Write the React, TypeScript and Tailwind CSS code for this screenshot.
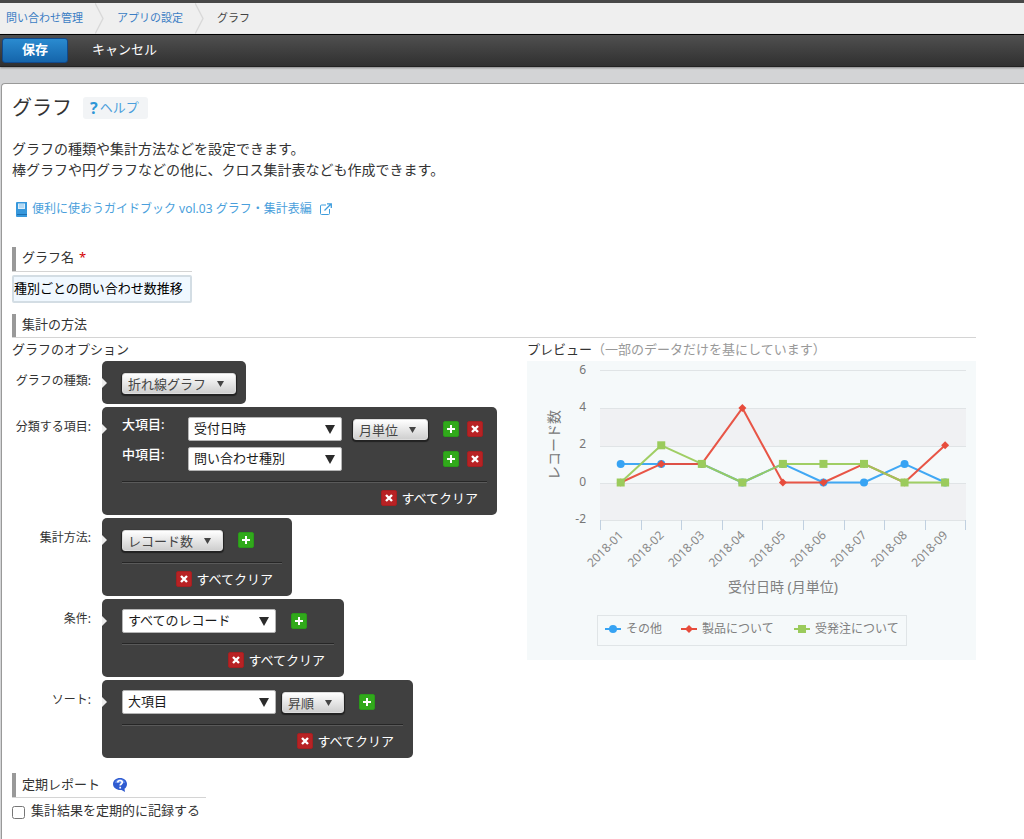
import type { ReactNode } from "react";

const MONTHS = ["2018-01", "2018-02", "2018-03", "2018-04", "2018-05", "2018-06", "2018-07", "2018-08", "2018-09"];

type Shape = "circle" | "diamond" | "square";

const SERIES: { name: string; color: string; shape: Shape; values: number[]; legendX: number }[] = [
  { name: "その他", color: "#37a3f3", shape: "circle", values: [1, 1, 1, 0, 1, 0, 0, 1, 0], legendX: 78 },
  { name: "製品について", color: "#e74c3c", shape: "diamond", values: [0, 1, 1, 4, 0, 0, 1, 0, 2], legendX: 154 },
  { name: "受発注について", color: "#9bcb5c", shape: "square", values: [0, 2, 1, 0, 1, 1, 1, 0, 0], legendX: 267 },
];

function Marker({ x, y, shape, color }: { x: number; y: number; shape: Shape; color: string }) {
  if (shape === "circle") return <circle cx={x} cy={y} r={4} fill={color} />;
  if (shape === "diamond")
    return <path d={`M${x} ${y - 4}L${x + 4} ${y}L${x} ${y + 4}L${x - 4} ${y}Z`} fill={color} />;
  return <rect x={x - 4} y={y - 4} width={8} height={8} fill={color} />;
}

const px = (i: number) => 93.7 + i * 40.55;
const py = (v: number) => 121.5 - v * 18.6;

function Chart() {
  return (
    <svg viewBox="0 0 449 299" className="block h-auto w-full bg-[#f5f9fa]" role="img" aria-label="レコード数">
      <rect x={73} y={47} width={366} height={38} fill="#f0f1f3" />
      <rect x={73} y={122} width={366} height={37} fill="#f0f1f3" />
      {[9, 47, 85, 122, 159].map((y) => (
        <rect key={y} x={73} y={y} width={366} height={1} fill="#e0e4e6" />
      ))}
      {Array.from({ length: 10 }, (_, i) => (
        <rect key={i} x={Math.round(73 + i * 40.6)} y={159} width={1} height={10} fill="#c0d0e0" />
      ))}
      {[6, 4, 2, 0, -2].map((v, i) => (
        <text key={v} x={59} y={13 + i * 37.2} textAnchor="end" className="fill-[#777777] text-[12px]">
          {v}
        </text>
      ))}
      <text transform="translate(32 84) rotate(-90)" textAnchor="middle" className="fill-[#777777] text-[14px]">
        レコード数
      </text>
      {MONTHS.map((m, i) => (
        <text
          key={m}
          transform={`translate(${97 + i * 40.55} 175) rotate(-45)`}
          textAnchor="end"
          className="fill-[#888888] text-[12px]"
        >
          {m}
        </text>
      ))}
      <text x={256} y={231} textAnchor="middle" className="fill-[#808080] text-[14px]">
        受付日時 (月単位)
      </text>
      {SERIES.map((s) => (
        <g key={s.name}>
          <polyline
            points={s.values.map((v, i) => `${px(i)},${py(v)}`).join(" ")}
            fill="none"
            stroke={s.color}
            strokeWidth={2}
            strokeLinejoin="round"
            strokeOpacity={0.95}
          />
          {s.values.map((v, i) => (
            <Marker key={i} x={px(i)} y={py(v)} shape={s.shape} color={s.color} />
          ))}
        </g>
      ))}
      <rect x={70.5} y={254.5} width={309} height={30} fill="none" stroke="#e0e5e7" />
      {SERIES.map((s) => (
        <g key={s.name}>
          <path d={`M${s.legendX} 268h16`} stroke={s.color} strokeWidth={2} />
          <Marker x={s.legendX + 8} y={268} shape={s.shape} color={s.color} />
          <text x={s.legendX + 21} y={272} className="fill-[#808080] text-[12px]">
            {s.name}
          </text>
        </g>
      ))}
    </svg>
  );
}

function CrumbArrow() {
  return (
    <svg width="10" height="31" viewBox="0 0 10 31" className="mx-3" aria-hidden="true">
      <path d="M0 0L8 15.500L0 31" fill="none" stroke="#fafafa" />
      <path d="M0 0L8 15.500L0 31" fill="none" stroke="#d8d8d8" strokeWidth="1.400" />
    </svg>
  );
}

function AddButton() {
  return (
    <button
      type="button"
      aria-label="追加"
      className="flex h-4 w-4 shrink-0 items-center justify-center rounded-xs border border-[#2a9a1a] bg-[#31a91b]"
    >
      <svg width="8" height="8" viewBox="0 0 8 8" aria-hidden="true">
        <path d="M4 0V8M0 4H8" stroke="#fff" strokeWidth="2" />
      </svg>
    </button>
  );
}

function Cross() {
  return (
    <span className="flex h-4 w-4 shrink-0 items-center justify-center rounded-xs border border-[#a32021] bg-[#b82224]">
      <svg width="8" height="8" viewBox="0 0 8 8" aria-hidden="true">
        <path d="M1 1L7 7M7 1L1 7" stroke="#fff" strokeWidth="2.4" />
      </svg>
    </span>
  );
}

function RemoveButton() {
  return (
    <button type="button" aria-label="削除" className="ml-2 block">
      <Cross />
    </button>
  );
}

function WideSelect({ label, value }: { label: string; value: string }) {
  return (
    <span className="relative block">
      <select
        aria-label={label}
        className="block h-6 w-[154px] appearance-none rounded-xs border border-[#b5b5b5] bg-white px-[5px] pb-[2px] text-[13px] leading-5 text-[#1a1a1a]"
      >
        <option>{value}</option>
      </select>
      <svg
        width="10"
        height="9"
        viewBox="0 0 10 9"
        className="pointer-events-none absolute top-2 right-[7px]"
        aria-hidden="true"
      >
        <path d="M0 0H10L5 9Z" fill="#2b2b2b" />
      </svg>
    </span>
  );
}

function PillSelect({ label, value }: { label: string; value: string }) {
  return (
    <span className="relative block">
      <select
        aria-label={label}
        className="block h-[21px] appearance-none rounded-[3px] border border-[#dddddd] bg-linear-to-b from-white to-[#cfcfcf] pr-7 pb-[2px] pl-[5px] text-[13px] leading-5 text-[#444444] shadow-[0_1px_1px_1px_#222222]"
      >
        <option>{value}</option>
      </select>
      <svg
        width="7"
        height="6"
        viewBox="0 0 7 6"
        className="pointer-events-none absolute top-2 right-3"
        aria-hidden="true"
      >
        <path d="M0 0H7L3.500 6Z" fill="#444" />
      </svg>
    </span>
  );
}

function Option({ label, children, clear = true, width }: { label: string; children: ReactNode; clear?: boolean; width: string }) {
  return (
    <div className="mb-[3px] flex items-start">
      <div className="w-[79px] shrink-0 pt-[10px] text-right text-[12px] leading-5 text-[#333333]">{label}</div>
      <div className={`relative ml-[11px] rounded-[5px] bg-[#404040] pt-[10px] pr-[10px] pb-[9px] pl-5 ${width}`}>
        <svg width="5" height="10" viewBox="0 0 5 10" className="absolute top-[17px] left-0" aria-hidden="true">
          <path d="M0 0L5 5L0 10Z" fill="#eeeeee" />
        </svg>
        <div className="flex flex-col gap-[6px]">{children}</div>
        {clear && (
          <div className="mt-[10px] flex justify-end border-t border-[#262626] pr-[9px] shadow-[inset_0_1px_0_#5a5a5a]">
            <button type="button" className="mt-2 flex items-center gap-1 text-[13px] leading-4 text-white">
              <Cross />
              すべてクリア
            </button>
          </div>
        )}
      </div>
    </div>
  );
}

function Row({ children }: { children: ReactNode }) {
  return <div className="flex h-6 items-center">{children}</div>;
}

export default function App() {
  return (
    <div className="min-h-screen bg-[#d3d4d6] font-['Noto_Sans','Noto_Sans_CJK_JP',sans-serif] text-[13px] text-[#333333]">
      <header>
        <nav className="flex h-[34px] items-center border-t-[3px] border-[#484848] bg-[#efefef] pl-[6px] text-[11px]" aria-label="パンくず">
          <a href="#app" className="text-[#3b7dc4]">問い合わせ管理</a>
          <CrumbArrow />
          <a href="#settings" className="text-[#3b7dc4]">アプリの設定</a>
          <CrumbArrow />
          <span className="text-[#444444]">グラフ</span>
        </nav>
        <div className="flex h-[33px] items-start border-t border-b border-t-black border-b-[#222222] bg-linear-to-b from-[#505050] to-[#303030] pt-[3px] pl-[2px] shadow-[0_1px_2px_#888888]">
          <button
            type="button"
            className="h-[25px] w-[66px] rounded-[3px] border border-[#10498c] bg-linear-to-b from-[#2a8bd0] to-[#1565ab] pb-1 text-[13px] leading-5 font-bold text-white"
          >
            保存
          </button>
          <button type="button" className="ml-6 h-[25px] pb-1 text-[13px] leading-5 text-white">
            キャンセル
          </button>
        </div>
      </header>

      <main className="mt-4 ml-[1px] min-h-[756px] rounded-tl-[4px] border-t border-l border-[#999999] bg-white pt-2 pr-12 pb-4 pl-[10px]">
        <div className="flex items-center gap-[11px]">
          <h1 className="text-[20px] leading-8">グラフ</h1>
          <a href="#help" className="flex h-[22px] items-center gap-[2px] rounded-[3px] bg-[#f2f4f6] pr-[9px] pl-[7px] text-[13px] text-[#4a9fdc]">
            <span className="text-[16px] font-bold text-[#2e96d6]">?</span>
            ヘルプ
          </a>
        </div>
        <p className="mt-[14px] text-[14px] leading-[21px]">
          グラフの種類や集計方法などを設定できます。
          <br />
          棒グラフや円グラフなどの他に、クロス集計表なども作成できます。
        </p>
        <a href="#guide" className="mt-[19px] ml-1 flex w-fit items-center text-[12px] leading-5 text-[#4a9fdc]">
          <svg width="12" height="15" viewBox="0 0 12 15" className="mr-1" aria-hidden="true">
            <path d="M1 0H11V15H1Q0 15 0 14V1Q0 0 1 0Z" fill="#3798dc" />
            <path d="M2 1.500H9V7H2Z" fill="#dceefa" />
            <path d="M3 3H8M3 5H8" stroke="#8bc4ec" />
            <path d="M1 12.500H11" stroke="#1d6fb0" />
          </svg>
          便利に使おうガイドブック vol.03 グラフ・集計表編
          <svg width="12" height="12" viewBox="0 0 12 12" className="ml-2" fill="none" stroke="#3f9ddd" aria-hidden="true">
            <path d="M6 2H1.500Q.5 2 .5 3V10.500Q.5 11.500 1.500 11.500H8.500Q9.500 11.500 9.500 10.500V6" />
            <path d="M7 .8H11.300V5M11 1L4.500 7.500" strokeWidth="1.300" />
          </svg>
        </a>

        <label
          htmlFor="graph-name"
          className="mt-7 block h-[25px] w-[180px] border-b border-[#d4d4d4]"
        >
          <span className="flex h-6 items-center gap-[5px] border-l-4 border-[#999999] pb-1 pl-[6px] leading-5">
            グラフ名 <span className="text-[#d40000]">*</span>
          </span>
        </label>
        <input
          id="graph-name"
          type="text"
          defaultValue="種別ごとの問い合わせ数推移"
          className="mt-[3px] block h-7 w-[180px] rounded-xs border-2 border-[#d3dde4] bg-[#f0f8ff] pb-[3px] text-[13px] text-black"
        />

        <h2 className="mt-[11px] h-6 border-b border-[#d4d4d4]">
          <span className="flex h-[23px] items-center border-l-4 border-[#999999] pb-[3px] pl-[6px] leading-5">集計の方法</span>
        </h2>

        <div className="flex items-start">
          <section className="w-[515px] shrink-0">
            <h3 className="mt-[1px] mb-[2px] leading-5">グラフのオプション</h3>
            <Option label="グラフの種類:" clear={false} width="w-fit">
              <Row>
                <PillSelect label="グラフの種類" value="折れ線グラフ" />
              </Row>
            </Option>
            <Option label="分類する項目:" width="w-[395px]">
              <Row>
                <span className="mb-2 w-[66px] font-medium text-white">大項目:</span>
                <WideSelect label="大項目" value="受付日時" />
                <span className="mr-[15px] ml-[11px]">
                  <PillSelect label="単位" value="月単位" />
                </span>
                <AddButton />
                <RemoveButton />
              </Row>
              <Row>
                <span className="mb-2 w-[66px] font-medium text-white">中項目:</span>
                <WideSelect label="中項目" value="問い合わせ種別" />
                <span className="ml-auto">
                  <AddButton />
                </span>
                <span className="mr-1">
                  <RemoveButton />
                </span>
              </Row>
            </Option>
            <Option label="集計方法:" width="w-[190px]">
              <Row>
                <PillSelect label="集計方法" value="レコード数" />
                <span className="ml-[15px]">
                  <AddButton />
                </span>
              </Row>
            </Option>
            <Option label="条件:" width="w-[242px]">
              <Row>
                <WideSelect label="条件" value="すべてのレコード" />
                <span className="ml-[15px]">
                  <AddButton />
                </span>
              </Row>
            </Option>
            <Option label="ソート:" width="w-[311px]">
              <Row>
                <WideSelect label="ソート" value="大項目" />
                <span className="mr-[15px] ml-[6px]">
                  <PillSelect label="順序" value="昇順" />
                </span>
                <AddButton />
              </Row>
            </Option>
          </section>
          <section className="min-w-0 flex-1">
            <h3 className="mt-[1px] mb-[2px] leading-5">
              プレビュー<span className="text-[#999999]">（一部のデータだけを基にしています）</span>
            </h3>
            <Chart />
          </section>
        </div>

        <h2 className="mt-3 h-[25px] w-[194px] border-b border-[#d4d4d4]">
          <span className="flex h-6 items-center border-l-4 border-[#999999] pb-[3px] pl-[6px] leading-5">
            定期レポート
            <svg width="16" height="16" viewBox="0 0 16 16" className="mt-[3px] ml-3" aria-hidden="true">
              <path d="M8 1C12 1 15 3.600 15 7C15 9.200 14 10.800 12.500 11.800L13 15L9.500 13C5 13.500 1 10.800 1 7C1 3.600 4 1 8 1Z" fill="#2f5bd0" />
              <path d="M3 6C3.500 3 6 2 8 2S12.500 3 13 6Z" fill="#5f88ea" />
              <path d="M5.800 5.500C5.800 2.800 10.300 2.900 10.300 5.300C10.300 7 8.200 6.900 8.200 8.600M8.200 9.800V11.400" stroke="#fff" strokeWidth="1.700" fill="none" />
            </svg>
          </span>
        </h2>
        <div className="mt-[2px] flex items-center gap-[6px]">
          <input id="record" type="checkbox" className="mt-1 h-[13px] w-[13px]" />
          <label htmlFor="record" className="leading-5">
            集計結果を定期的に記録する
          </label>
        </div>
      </main>
    </div>
  );
}
